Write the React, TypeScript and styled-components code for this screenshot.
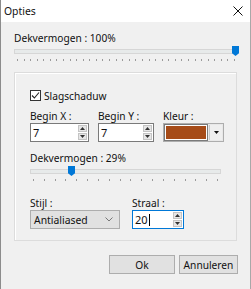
import React from "react";
import styled, { createGlobalStyle } from "styled-components";

const Global = createGlobalStyle`
  html, body { margin: 0; padding: 0; background: #f0f0f0; }
  body { font-family: "Segoe UI", "Noto Sans", sans-serif; font-size: 10.2px; color: #111; }
`;

const Window = styled.div`
  width: 251px;
  height: 289px;
  box-sizing: border-box;
  background: #f0f0f0;
  border-left: 1px solid #8c8c8c;
  border-right: 1px solid #a8a8a8;
  display: flex;
  flex-direction: column;
`;

const TitleBar = styled.div`
  height: 22px;
  background: #fff;
  display: flex;
  align-items: center;
  justify-content: space-between;
  padding: 0 7px 0 3px;
  font-size: 10.4px;
`;

const Body = styled.div`
  display: flex;
  flex-direction: column;
  padding: 11px 12px 0 13px;
`;

const Label = styled.div`
  line-height: 11px;
  height: 11px;
  white-space: nowrap;
`;

const SliderWrap = styled.div<{ $w: number; $mt: number }>`
  width: ${(p) => p.$w}px;
  display: flex;
  flex-direction: column;
  margin-top: ${(p) => p.$mt}px;
`;

const SliderBox = styled.div`
  position: relative;
  height: 10px;
  display: flex;
  align-items: center;
`;

const Track = styled.div`
  flex: 1;
  height: 3px;
  background: #e7eaea;
  border: 1px solid #d6d6d6;
`;

const Thumb = styled.div`
  position: absolute;
  top: 0;
  width: 7px;
  height: 10px;
  background: #0078d7;
  clip-path: polygon(0 0, 100% 0, 100% 72%, 50% 100%, 0 72%);
`;

const TickSvg = styled.svg`
  display: block;
  margin-top: 3px;
`;

const Ticks = ({ w, n }: { w: number; n: number }) => {
  const xs = Array.from({ length: n }, (_, i) => Math.round(3 + (i * (w - 7)) / (n - 1)) + 0.5);
  return (
    <TickSvg width={w} height={3}>
      {xs.map((x, i) => (
        <line key={i} x1={x} y1={0} x2={x} y2={2} stroke="#9a9a9a" strokeWidth={1} />
      ))}
    </TickSvg>
  );
};

const Slider = ({ w, pos, ticks, mt }: { w: number; pos: number; ticks: number; mt: number }) => (
  <SliderWrap $w={w} $mt={mt}>
    <SliderBox>
      <Track />
      <Thumb style={{ left: pos }} />
    </SliderBox>
    <Ticks w={w} n={ticks} />
  </SliderWrap>
);

const Group = styled.div`
  margin-top: 10px;
  width: 223px;
  height: 169px;
  box-sizing: border-box;
  border: 1px solid #dcdcdc;
  box-shadow: inset 1px 1px 0 #fff;
  padding: 16px 0 0 15px;
  display: flex;
  flex-direction: column;
`;

const CheckRow = styled.div`
  display: flex;
  align-items: center;
  gap: 3px;
  height: 13px;
`;

const CheckBox = styled.div`
  width: 9px;
  height: 9px;
  border: 1px solid #333;
  background: #fff;
  display: flex;
  align-items: center;
  justify-content: center;
`;

const Row = styled.div<{ $gap: number; $mt: number }>`
  display: flex;
  gap: ${(p) => p.$gap}px;
  margin-top: ${(p) => p.$mt}px;
`;

const Field = styled.div<{ $w: number }>`
  width: ${(p) => p.$w}px;
  display: flex;
  flex-direction: column;
  gap: 1px;
`;

const Input = styled.div<{ $focus?: boolean }>`
  height: 19px;
  box-sizing: border-box;
  border: 1px solid ${(p) => (p.$focus ? "#0078d7" : "#7a7a7a")};
  background: #fff;
  display: flex;
  align-items: center;
  padding: 0 1px 0 2px;
  font-size: 11px;
`;

const InputText = styled.span`
  flex: 1;
  display: flex;
  align-items: center;
`;

const Caret = styled.span`
  display: inline-block;
  width: 1px;
  height: 12px;
  background: #000;
  margin-left: 1px;
`;

const Spin = styled.div`
  width: 9px;
  height: 15px;
  display: flex;
  flex-direction: column;
  gap: 1px;
`;

const SpinBtn = styled.div`
  flex: 1;
  background: #e6e6e6;
  border: 1px solid #c4c4c4;
  box-sizing: border-box;
  display: flex;
  align-items: center;
  justify-content: center;
`;

const Spinner = () => (
  <Spin>
    <SpinBtn>
      <svg width="5" height="3"><path d="M0 3 L2.5 0 L5 3 Z" fill="#333" /></svg>
    </SpinBtn>
    <SpinBtn>
      <svg width="5" height="3"><path d="M0 0 L2.5 3 L5 0 Z" fill="#333" /></svg>
    </SpinBtn>
  </Spin>
);

const ColorBox = styled.div`
  height: 19px;
  box-sizing: border-box;
  border: 1px solid #adadad;
  background: #e8e8e8;
  display: flex;
  align-items: center;
  padding: 1px;
  gap: 2px;
`;

const Swatch = styled.div<{ $c: string }>`
  flex: 1;
  height: 13px;
  background: ${(p) => p.$c};
  border: 1px solid #fff;
  outline: 1px solid #7a7a7a;
`;

const DropBtn = styled.div`
  width: 12px;
  height: 15px;
  display: flex;
  align-items: center;
  justify-content: center;
  border-left: 1px solid #c8c8c8;
  background: #efefef;
`;

const Combo = styled.div`
  height: 19px;
  box-sizing: border-box;
  border: 1px solid #adadad;
  background: #e1e1e1;
  display: flex;
  align-items: center;
  justify-content: space-between;
  padding: 0 6px 0 3px;
  font-size: 10.4px;
`;

const Footer = styled.div`
  display: flex;
  justify-content: flex-end;
  gap: 4px;
  margin-top: 14px;
  width: 224px;
`;

const Button = styled.div<{ $w: number }>`
  width: ${(p) => p.$w}px;
  height: 19px;
  box-sizing: border-box;
  border: 1px solid #adadad;
  background: #e1e1e1;
  display: flex;
  align-items: center;
  justify-content: center;
`;

export default function App() {
  return (
    <>
      <Global />
      <Window>
        <TitleBar>
          <span>Opties</span>
          <svg width="10" height="10" viewBox="0 0 10 10">
            <path d="M0.5 0.5 L9.5 9.5 M9.5 0.5 L0.5 9.5" stroke="#111" strokeWidth="1" />
          </svg>
        </TitleBar>
        <Body>
          <Label>Dekvermogen : 100%</Label>
          <Slider w={224} pos={218} ticks={34} mt={2} />
          <Group>
            <CheckRow>
              <CheckBox>
                <svg width="9" height="9" viewBox="0 0 9 9">
                  <path d="M1 4.5 L3.4 7 L8 1.5" stroke="#222" strokeWidth="1.1" fill="none" />
                </svg>
              </CheckBox>
              <span>Slagschaduw</span>
            </CheckRow>
            <Row $gap={9} $mt={9}>
              <Field $w={59}>
                <Label>Begin X :</Label>
                <Input>
                  <InputText>7</InputText>
                  <Spinner />
                </Input>
              </Field>
              <Field $w={56}>
                <Label>Begin Y :</Label>
                <Input>
                  <InputText>7</InputText>
                  <Spinner />
                </Input>
              </Field>
              <Field $w={61}>
                <Label>Kleur :</Label>
                <ColorBox>
                  <Swatch $c="#a64b18" />
                  <DropBtn>
                    <svg width="5" height="3"><path d="M0 0 L2.5 3 L5 0 Z" fill="#111" /></svg>
                  </DropBtn>
                </ColorBox>
              </Field>
            </Row>
            <Row $gap={0} $mt={11}>
              <Field $w={191}>
                <Label>Dekvermogen : 29%</Label>
                <Slider w={191} pos={38} ticks={18} mt={1} />
              </Field>
            </Row>
            <Row $gap={12} $mt={16}>
              <Field $w={90}>
                <Label>Stijl :</Label>
                <Combo>
                  <span>Antialiased</span>
                  <svg width="8" height="5" viewBox="0 0 8 5">
                    <path d="M0.5 0.5 L4 4 L7.5 0.5" stroke="#777" strokeWidth="1" fill="none" />
                  </svg>
                </Combo>
              </Field>
              <Field $w={52}>
                <Label>Straal :</Label>
                <Input $focus>
                  <InputText>
                    20<Caret />
                  </InputText>
                  <Spinner />
                </Input>
              </Field>
            </Row>
          </Group>
          <Footer>
            <Button $w={66}>Ok</Button>
            <Button $w={59}>Annuleren</Button>
          </Footer>
        </Body>
      </Window>
    </>
  );
}
